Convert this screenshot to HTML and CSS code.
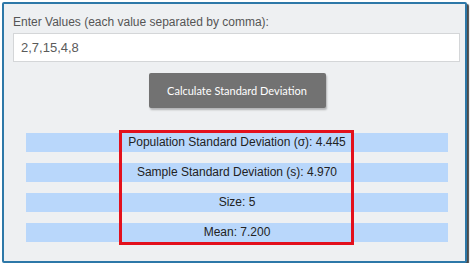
FILE: index.html
```html
<!DOCTYPE html>
<html lang="en">
<head>
    <meta charset="UTF-8">
    <title>Standard Deviation Calculator</title>
    <link rel="stylesheet" href="styles.css">
</head>
<body>
    <div class="calc">
        <label for="values">Enter Values (each value separated by comma):</label>
        <input type="text" id="values" value="2,7,15,4,8">

        <div class="actions">
            <button type="button">Calculate Standard Deviation</button>
        </div>

        <div class="results">
            <div class="row">Population Standard Deviation (σ): 4.445</div>
            <div class="row">Sample Standard Deviation (s): 4.970</div>
            <div class="row">Size: 5</div>
            <div class="row">Mean: 7.200</div>
            <div class="highlight"></div>
        </div>
    </div>
</body>
</html>
```

FILE: styles.css
```css
body {
    margin: 0;
    background: #fff;
    font-family: "Liberation Sans", Arial, sans-serif;
}
.calc {
    box-sizing: border-box;
    width: 465px;
    height: 261px;
    margin: 2px 0 0 2px;
    padding: 11px 6px 0 9px;
    background: #eef0f2;
    border: 2px solid #2d78a8;
    border-radius: 2px;
    box-shadow: 2px 2px 1px #4a4a4a;
}
label {
    display: block;
    font-size: 12px;
    color: #555;
    line-height: 14px;
}
input {
    box-sizing: border-box;
    display: block;
    width: 447px;
    height: 29px;
    margin-top: 4px;
    padding: 0 7px;
    border: 1px solid #d4d6d8;
    background: #fff;
    font-family: "Liberation Sans", Arial, sans-serif;
    font-size: 13px;
    color: #5a5a5a;
}
.actions {
    display: flex;
    justify-content: center;
    margin-top: 11px;
    padding-left: 2px;
}
button {
    width: 177px;
    height: 35px;
    border: none;
    border-radius: 2px;
    background: #727272;
    color: #fff;
    font-family: Lato, "Liberation Sans", sans-serif;
    font-size: 11px;
    box-shadow: 1px 2px 2px rgba(0,0,0,0.25);
}
.results {
    position: relative;
    width: 422px;
    margin: 25px 0 0 13px;
    display: flex;
    flex-direction: column;
    gap: 11px;
}
.row {
    height: 19px;
    line-height: 19px;
    background: #b9d7fb;
    text-align: center;
    font-size: 12px;
    color: #222;
}
.highlight {
    position: absolute;
    left: 93px;
    top: -3px;
    width: 235px;
    height: 115px;
    box-sizing: border-box;
    border: 3px solid #e3101c;
}
```
